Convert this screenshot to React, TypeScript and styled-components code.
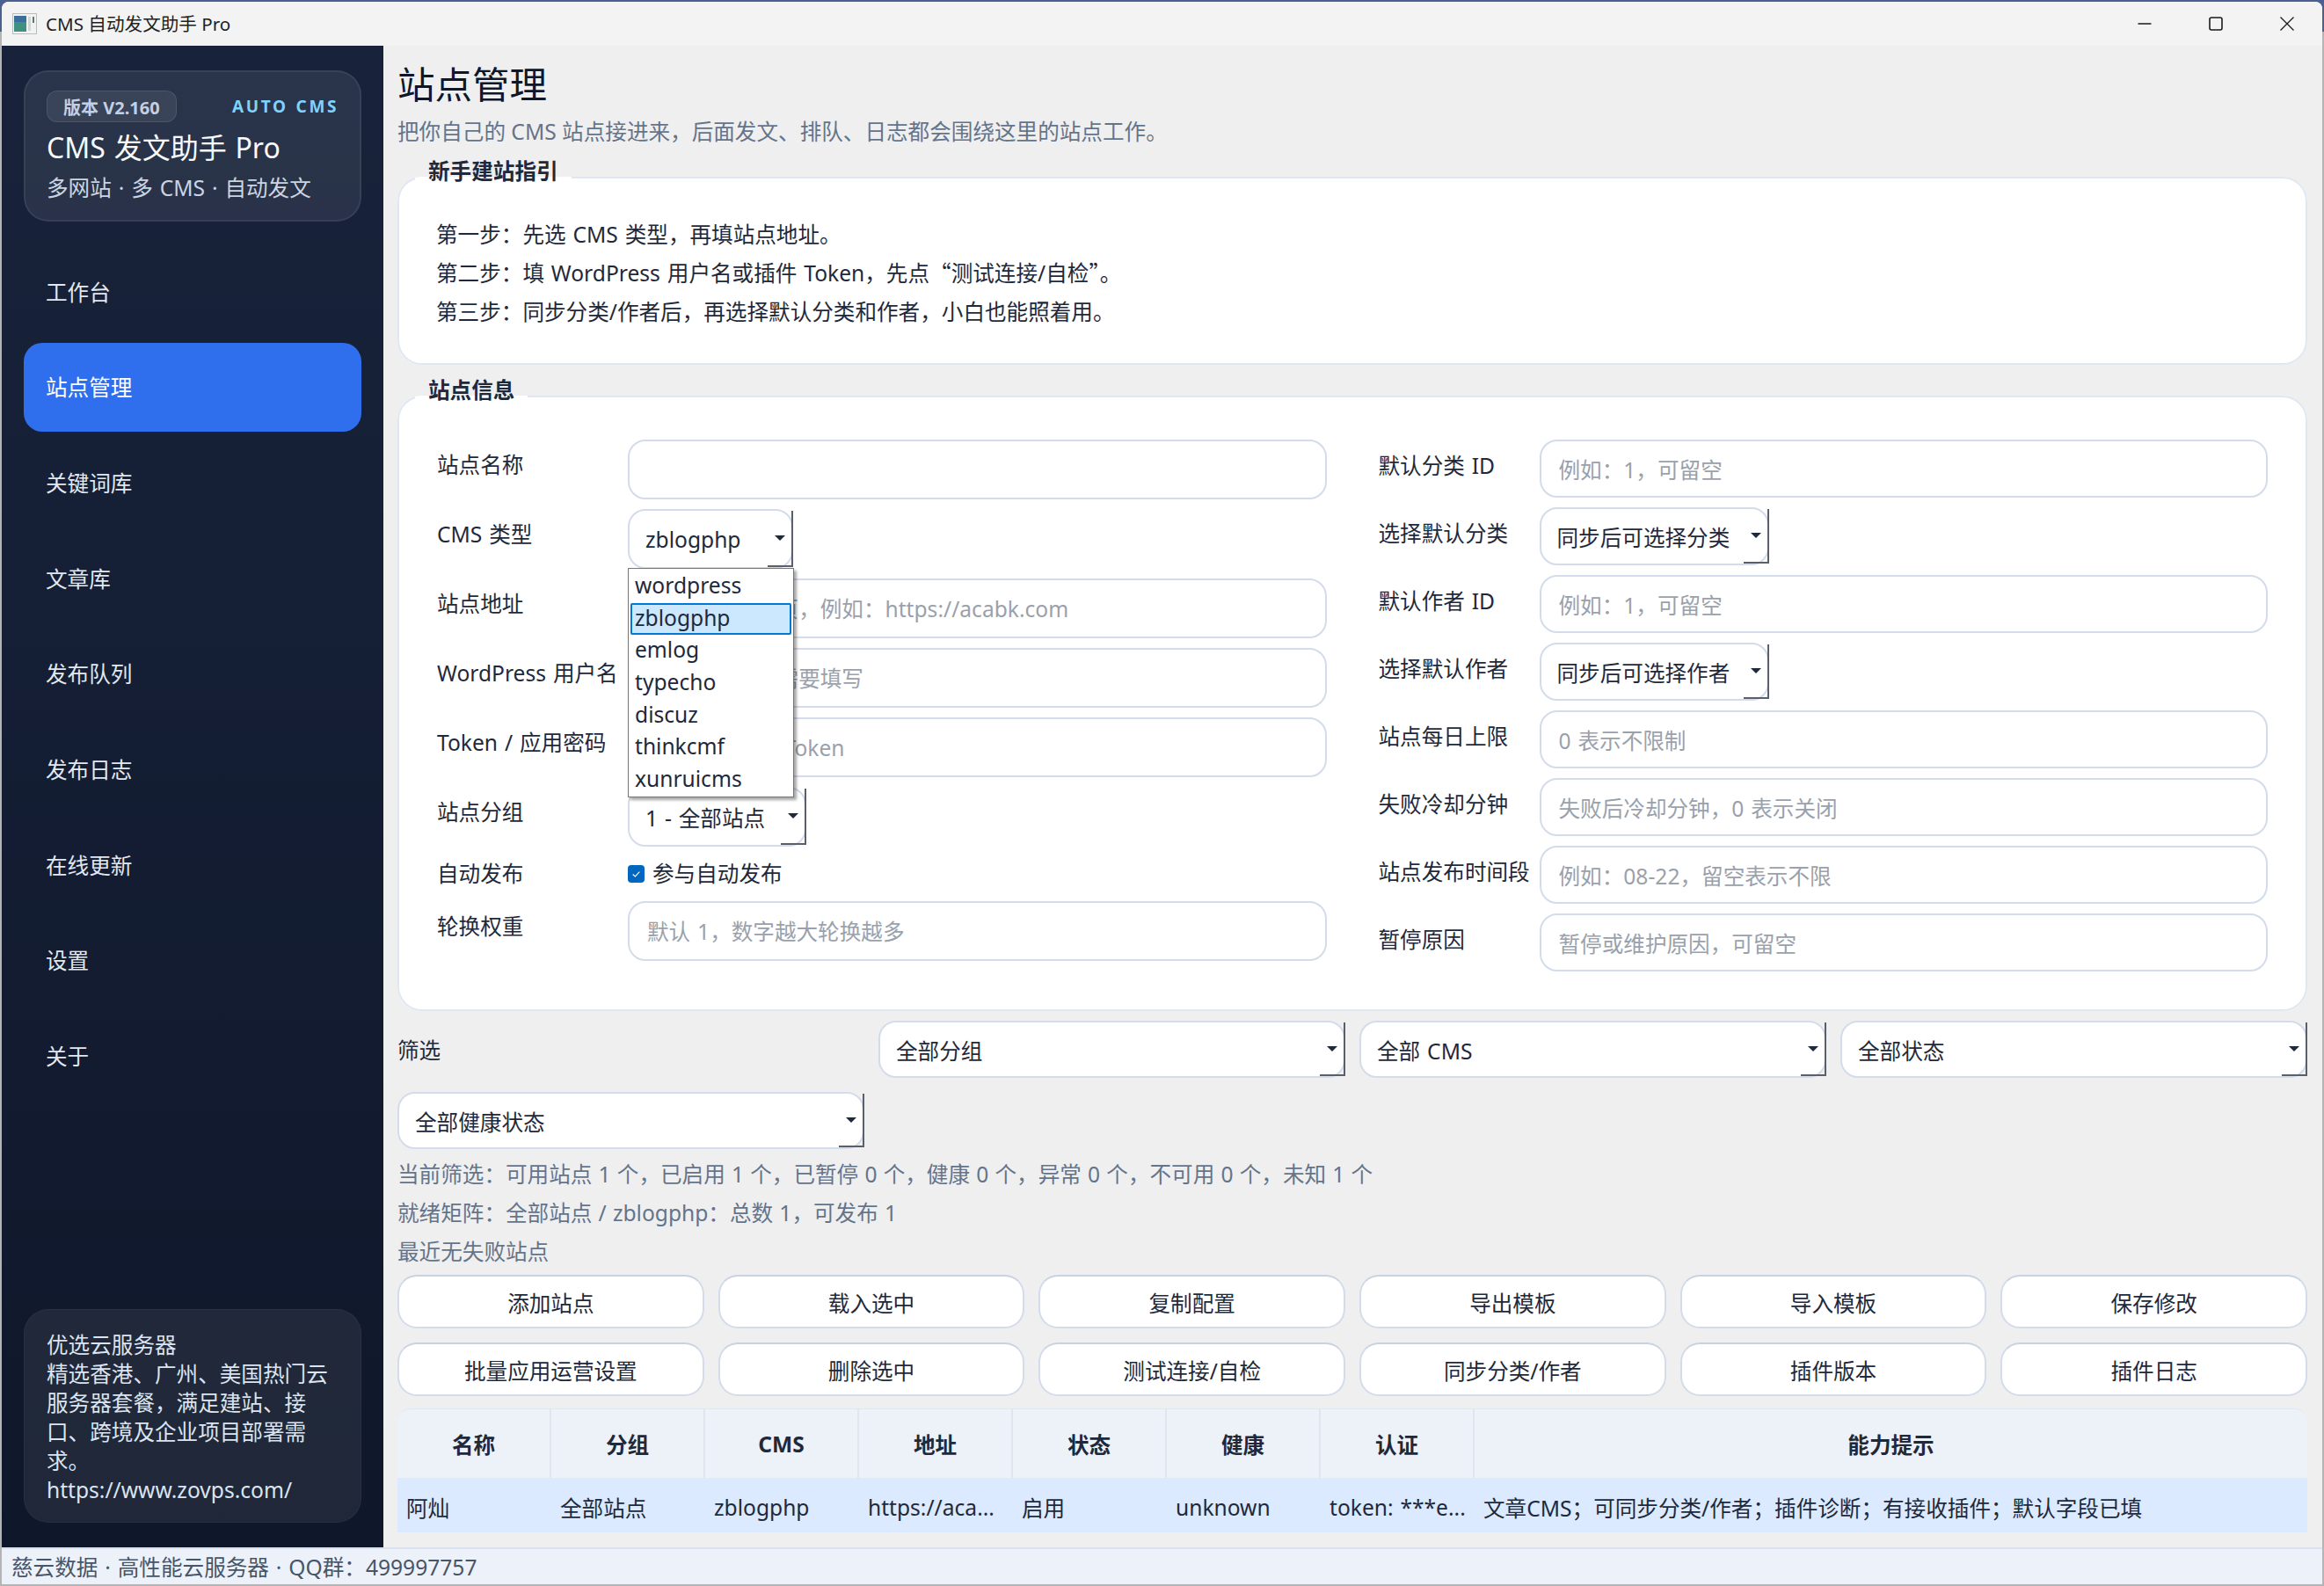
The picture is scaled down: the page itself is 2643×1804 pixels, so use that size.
import React from "react";
import styled, { createGlobalStyle } from "styled-components";

const navItems = ["工作台", "站点管理", "关键词库", "文章库", "发布队列", "发布日志", "在线更新", "设置", "关于"];

const cmsOptions = ["wordpress", "zblogphp", "emlog", "typecho", "discuz", "thinkcmf", "xunruicms"];

const buttons = [
  "添加站点",
  "载入选中",
  "复制配置",
  "导出模板",
  "导入模板",
  "保存修改",
  "批量应用运营设置",
  "删除选中",
  "测试连接/自检",
  "同步分类/作者",
  "插件版本",
  "插件日志",
];

const tableHead = ["名称", "分组", "CMS", "地址", "状态", "健康", "认证", "能力提示"];
const tableRow = [
  "阿灿",
  "全部站点",
  "zblogphp",
  "https://aca...",
  "启用",
  "unknown",
  "token: ***e...",
  "文章CMS；可同步分类/作者；插件诊断；有接收插件；默认字段已填",
];

export default function App() {
  return (
    <>
      <GlobalStyle />
      <Window>
        <TitleBar>
          <AppIcon viewBox="0 0 28 24">
            <rect x="0.5" y="0.5" width="27" height="23" fill="#f1f3f1" stroke="#b9bdbd" />
            <rect x="2" y="3" width="14" height="18" fill="#3f8f83" />
            <rect x="2" y="3" width="14" height="7" fill="#3a6f9c" />
            <rect x="18" y="4" width="3" height="16" fill="#cfd6d4" />
            <rect x="23" y="4" width="2" height="7" fill="#5f7a72" />
          </AppIcon>
          <WindowTitle>CMS 自动发文助手 Pro</WindowTitle>
          <WindowControls>
            <svg viewBox="0 0 16 16" width="16" height="16">
              <path d="M0.5 8h15" stroke="#1a1a1a" strokeWidth="1.4" fill="none" />
            </svg>
            <svg viewBox="0 0 16 16" width="16" height="16">
              <rect x="1" y="1" width="14" height="14" rx="2" stroke="#1a1a1a" strokeWidth="1.6" fill="none" />
            </svg>
            <svg viewBox="0 0 16 16" width="16" height="16">
              <path d="M0.5 0.5l15 15M15.5 0.5l-15 15" stroke="#1a1a1a" strokeWidth="1.3" fill="none" />
            </svg>
          </WindowControls>
        </TitleBar>

        <Body>
          <Sidebar>
            <BrandCard>
              <BrandTop>
                <VersionBadge>版本 V2.160</VersionBadge>
                <AutoTag>AUTO CMS</AutoTag>
              </BrandTop>
              <BrandName>CMS 发文助手 Pro</BrandName>
              <BrandSub>多网站 · 多 CMS · 自动发文</BrandSub>
            </BrandCard>

            <Nav>
              {navItems.map((item) => (
                <NavItem key={item} $active={item === "站点管理"}>
                  {item}
                </NavItem>
              ))}
            </Nav>

            <PromoCard>
              <div>优选云服务器</div>
              <div>精选香港、广州、美国热门云服务器套餐，满足建站、接口、跨境及企业项目部署需求。</div>
              <div>https://www.zovps.com/</div>
            </PromoCard>
          </Sidebar>

          <Main>
            <PageTitle>站点管理</PageTitle>
            <PageSub>把你自己的 CMS 站点接进来，后面发文、排队、日志都会围绕这里的站点工作。</PageSub>

            <Group>
              <GroupTitle>新手建站指引</GroupTitle>
              <GuideBody>
                <GuideLine>第一步：先选 CMS 类型，再填站点地址。</GuideLine>
                <GuideLine>
                  第二步：填 WordPress 用户名或插件 Token，先点<CjkText>“</CjkText>测试连接/自检<CjkText>”</CjkText>。
                </GuideLine>
                <GuideLine>第三步：同步分类/作者后，再选择默认分类和作者，小白也能照着用。</GuideLine>
              </GuideBody>
            </Group>

            <Group>
              <GroupTitle>站点信息</GroupTitle>
              <FormBody>
                <LeftColumn>
                  <LeftRow>
                    <FieldLabel>站点名称</FieldLabel>
                    <TextInput />
                  </LeftRow>
                  <LeftRow>
                    <FieldLabel>CMS 类型</FieldLabel>
                    <SelectBox $width={188}>
                      zblogphp
                      <OptionList>
                        {cmsOptions.map((option) => (
                          <OptionItem key={option} $selected={option === "zblogphp"}>
                            {option}
                          </OptionItem>
                        ))}
                      </OptionList>
                    </SelectBox>
                  </LeftRow>
                  <LeftRow>
                    <FieldLabel>站点地址</FieldLabel>
                    <TextInput placeholder="请填写站点首页，例如：https://acabk.com" />
                  </LeftRow>
                  <LeftRow>
                    <FieldLabel>WordPress 用户名</FieldLabel>
                    <TextInput placeholder="应用密码模式需要填写" />
                  </LeftRow>
                  <LeftRow>
                    <FieldLabel>Token / 应用密码</FieldLabel>
                    <TextInput placeholder="填写应用密码 Token" />
                  </LeftRow>
                  <LeftRow>
                    <FieldLabel>站点分组</FieldLabel>
                    <SelectBox $width={203}>1 - 全部站点</SelectBox>
                  </LeftRow>
                  <CheckRow>
                    <FieldLabel>自动发布</FieldLabel>
                    <CheckLabel>
                      <CheckMark>
                        <svg viewBox="0 0 20 20" width="20" height="20">
                          <path d="M6 10.5l2.8 2.6L14 7.5" stroke="#fff" strokeWidth="1.2" fill="none" />
                        </svg>
                      </CheckMark>
                      <CheckText>参与自动发布</CheckText>
                    </CheckLabel>
                  </CheckRow>
                  <LeftRow>
                    <FieldLabel>轮换权重</FieldLabel>
                    <TextInput placeholder="默认 1，数字越大轮换越多" />
                  </LeftRow>
                </LeftColumn>

                <RightColumn>
                  <RightRow>
                    <FieldLabel>默认分类 ID</FieldLabel>
                    <TextInput placeholder="例如：1，可留空" />
                  </RightRow>
                  <RightRow>
                    <FieldLabel>选择默认分类</FieldLabel>
                    <SelectBox $width={261}>同步后可选择分类</SelectBox>
                  </RightRow>
                  <RightRow>
                    <FieldLabel>默认作者 ID</FieldLabel>
                    <TextInput placeholder="例如：1，可留空" />
                  </RightRow>
                  <RightRow>
                    <FieldLabel>选择默认作者</FieldLabel>
                    <SelectBox $width={261}>同步后可选择作者</SelectBox>
                  </RightRow>
                  <RightRow>
                    <FieldLabel>站点每日上限</FieldLabel>
                    <TextInput placeholder="0 表示不限制" />
                  </RightRow>
                  <RightRow>
                    <FieldLabel>失败冷却分钟</FieldLabel>
                    <TextInput placeholder="失败后冷却分钟，0 表示关闭" />
                  </RightRow>
                  <RightRow>
                    <FieldLabel>站点发布时间段</FieldLabel>
                    <TextInput placeholder="例如：08-22，留空表示不限" />
                  </RightRow>
                  <RightRow>
                    <FieldLabel>暂停原因</FieldLabel>
                    <TextInput placeholder="暂停或维护原因，可留空" />
                  </RightRow>
                </RightColumn>
              </FormBody>
            </Group>

            <FilterGrid>
              <FilterLabel>筛选</FilterLabel>
              <SelectBox>全部分组</SelectBox>
              <SelectBox>全部 CMS</SelectBox>
              <SelectBox>全部状态</SelectBox>
              <SelectBox>全部健康状态</SelectBox>
            </FilterGrid>

            <InfoLines>
              <div>当前筛选：可用站点 1 个，已启用 1 个，已暂停 0 个，健康 0 个，异常 0 个，不可用 0 个，未知 1 个</div>
              <div>就绪矩阵：全部站点 / zblogphp：总数 1，可发布 1</div>
              <div>最近无失败站点</div>
            </InfoLines>

            <ButtonGrid>
              {buttons.map((label) => (
                <ActionButton key={label}>{label}</ActionButton>
              ))}
            </ButtonGrid>

            <SiteTable>
              <colgroup>
                {tableHead.slice(0, 7).map((head) => (
                  <col key={head} width="175" />
                ))}
                <col />
              </colgroup>
              <thead>
                <tr>
                  {tableHead.map((head) => (
                    <HeadCell key={head}>{head}</HeadCell>
                  ))}
                </tr>
              </thead>
              <tbody>
                <tr>
                  {tableRow.map((cell) => (
                    <RowCell key={cell}>{cell}</RowCell>
                  ))}
                </tr>
              </tbody>
            </SiteTable>
          </Main>
        </Body>

        <StatusBar>慈云数据 · 高性能云服务器 · QQ群：499997757</StatusBar>
      </Window>
    </>
  );
}

const GlobalStyle = createGlobalStyle`
  html, body {
    margin: 0;
    height: 100%;
  }

  body {
    background: linear-gradient(#4a6090 0 36px, #b4b4b4 36px);
    font-family: "Noto Sans", "Noto Sans CJK SC", sans-serif;
    font-size: 24.6px;
    word-spacing: 1.5px;
    color: #1e293b;
  }

  * {
    box-sizing: border-box;
  }
`;

const Window = styled.div`
  width: 2639px;
  height: 1800px;
  margin: 2px;
  display: flex;
  flex-direction: column;
  background: #efefef;
  border-radius: 8px 8px 0 0;
  overflow: hidden;
`;

const TitleBar = styled.div`
  height: 50px;
  flex: none;
  display: flex;
  align-items: center;
  padding-left: 12px;
  background: #f3f3f3;
`;

const AppIcon = styled.svg`
  width: 28px;
  height: 24px;
`;

const WindowTitle = styled.div`
  margin-left: 10px;
  padding-bottom: 2px;
  font-size: 20.6px;
  word-spacing: 0;
  color: #1f1f1f;
`;

const WindowControls = styled.div`
  margin-left: auto;
  padding-right: 32px;
  display: flex;
  gap: 65px;
`;

const Body = styled.div`
  flex: 1;
  min-height: 0;
  display: flex;
`;

const Sidebar = styled.aside`
  width: 434px;
  flex: none;
  display: flex;
  flex-direction: column;
  padding: 28px 25px;
  background: linear-gradient(#18233b, #0f172a);
`;

const BrandCard = styled.div`
  height: 172px;
  padding: 21px 24px 0;
  border: 2px solid rgba(255, 255, 255, 0.07);
  border-radius: 28px;
  background: rgba(255, 255, 255, 0.08);
`;

const BrandTop = styled.div`
  display: flex;
  align-items: center;
  justify-content: space-between;
`;

const VersionBadge = styled.div`
  height: 36px;
  padding: 0 18px;
  display: flex;
  align-items: center;
  border: 1px solid rgba(255, 255, 255, 0.1);
  border-radius: 12px;
  background: rgba(255, 255, 255, 0.08);
  font-size: 20px;
  font-weight: 700;
  word-spacing: 0;
  color: #c3d0e4;
`;

const AutoTag = styled.div`
  font-size: 19px;
  font-weight: 700;
  letter-spacing: 2.6px;
  color: #7dd3fc;
`;

const BrandName = styled.div`
  margin-top: 7px;
  font-size: 32px;
  line-height: 44px;
  color: #f8fafc;
`;

const BrandSub = styled.div`
  margin-top: 7px;
  line-height: 34px;
  color: #cbd5e1;
`;

const Nav = styled.nav`
  margin-top: 29px;
  display: flex;
  flex-direction: column;
  gap: 7.7px;
`;

const NavItem = styled.div<{ $active?: boolean }>`
  height: 101px;
  padding: 0 0 2px 25px;
  display: flex;
  align-items: center;
  border-radius: 21px;
  color: ${(p) => (p.$active ? "#ffffff" : "#e2e8f0")};
  background: ${(p) => (p.$active ? "#2f6fed" : "transparent")};
`;

const PromoCard = styled.div`
  margin-top: auto;
  height: 243px;
  padding: 23px 25px 0;
  border: 1px solid rgba(255, 255, 255, 0.04);
  border-radius: 28px;
  background: rgba(255, 255, 255, 0.07);
  line-height: 33px;
  color: #dbe4f0;
`;

const Main = styled.main`
  flex: 1;
  min-width: 0;
  padding: 19px 17px 0 16px;
`;

const PageTitle = styled.h1`
  margin: 0;
  font-size: 42.5px;
  line-height: 50px;
  font-weight: 400;
  color: #0f172a;
`;

const PageSub = styled.div`
  margin-top: 11px;
  margin-bottom: 12px;
  line-height: 36px;
  word-spacing: 0;
  color: #64748b;
`;

const Group = styled.fieldset`
  margin: 0 0 14px;
  padding: 0;
  min-width: 0;
  border: 2px solid #dfe7f2;
  border-radius: 28px;
  background: #ffffff;
`;

const GroupTitle = styled.legend`
  margin-left: 18px;
  padding: 0 15px 14px;
  line-height: 30px;
  font-weight: 700;
  color: #1e293b;
`;

const GuideBody = styled.div`
  padding: 21px 42px 36px;
`;

const GuideLine = styled.div`
  height: 44px;
  line-height: 44px;
`;

const CjkText = styled.span`
  font-family: "Noto Sans CJK SC", sans-serif;
  line-height: 0;
`;

const FormBody = styled.div`
  display: grid;
  grid-template-columns: 1fr 1fr;
  column-gap: 59px;
  padding: 27px 43px 43px;
`;

const LeftColumn = styled.div`
  display: flex;
  flex-direction: column;
  gap: 11px;
`;

const RightColumn = styled(LeftColumn)``;

const FieldLabel = styled.div`
  padding-bottom: 14px;
  white-space: nowrap;
  color: #1e293b;
`;

const TextInput = styled.input`
  width: 100%;
  height: 100%;
  padding: 0 20px;
  border: 2px solid #d3dcea;
  border-radius: 20px;
  background: #ffffff;
  font: inherit;
  word-spacing: inherit;
  color: #1e293b;
  outline: none;

  &::placeholder {
    color: #9aa1ab;
    opacity: 1;
  }
`;

const LeftRow = styled.div`
  height: 68px;
  display: grid;
  grid-template-columns: 217px 1fr;
  align-items: center;
`;

const CheckRow = styled(LeftRow)`
  height: 40px;

  ${FieldLabel} {
    padding-bottom: 4px;
  }
`;

const RightRow = styled(LeftRow)`
  height: 66px;
  grid-template-columns: 183px 1fr;

  ${FieldLabel} {
    padding-bottom: 10px;
  }

  ${TextInput} {
    padding-top: 2px;
  }
`;

const SelectBox = styled.div<{ $width?: number }>`
  position: relative;
  width: ${(p) => (p.$width ? `${p.$width}px` : "100%")};
  height: 100%;
  padding: 0 18px;
  display: flex;
  align-items: center;
  white-space: nowrap;
  border: 2px solid #d3dcea;
  border-radius: 20px;
  background: #ffffff;
  color: #1e293b;

  &::before {
    content: "";
    position: absolute;
    right: 7px;
    top: calc(50% - 4px);
    border-left: 6px solid transparent;
    border-right: 6px solid transparent;
    border-top: 6px solid #1e293b;
  }

  &::after {
    content: "";
    position: absolute;
    right: -2px;
    top: 0;
    bottom: 0;
    width: 27px;
    border-right: 2px solid #59606c;
    border-bottom: 2px solid #59606c;
  }
`;

const OptionList = styled.div`
  position: absolute;
  z-index: 5;
  left: -2px;
  top: calc(100% + 1px);
  width: 189px;
  padding: 2px 2px 1px;
  border: 1px solid #767676;
  background: #ffffff;
  box-shadow: 3px 3px 3px rgba(0, 0, 0, 0.35);
`;

const OptionItem = styled.div<{ $selected?: boolean }>`
  height: 36.6px;
  padding: 0 0 3px 3px;
  display: flex;
  align-items: center;
  border: 2px solid ${(p) => (p.$selected ? "#0078d7" : "transparent")};
  border-radius: 2px;
  background: ${(p) => (p.$selected ? "#cce8ff" : "transparent")};
  color: #1e293b;
`;

const CheckLabel = styled.div`
  display: flex;
  align-items: center;
  gap: 9px;
  color: #1e293b;
`;

const CheckText = styled.span`
  margin-top: -4px;
`;

const CheckMark = styled.span`
  width: 19px;
  height: 20px;
  display: flex;
  border-radius: 4px;
  background: #0067c0;
`;

const FilterGrid = styled.div`
  margin-top: -3px;
  display: grid;
  grid-template-columns: repeat(4, 1fr);
  grid-auto-rows: 65px;
  gap: 16px;
`;

const FilterLabel = styled.div`
  align-self: center;
  padding-bottom: 2px;
  color: #1e293b;
`;

const InfoLines = styled.div`
  margin-top: 7px;
  line-height: 44px;
  word-spacing: 0.8px;
  color: #64748b;
`;

const ButtonGrid = styled.div`
  margin-top: 4px;
  display: grid;
  grid-template-columns: repeat(6, 1fr);
  grid-auto-rows: 61px;
  gap: 16px;
`;

const ActionButton = styled.button`
  border: 2px solid #d3dcea;
  border-top-color: #c8d3e2;
  border-radius: 22px;
  background: #ffffff;
  font: inherit;
  color: #1e293b;
`;

const SiteTable = styled.table`
  margin-top: 14px;
  width: 100%;
  table-layout: fixed;
  border-collapse: separate;
  border-spacing: 0;
`;

const HeadCell = styled.th`
  height: 79px;
  padding: 0;
  font-weight: 700;
  color: #1e293b;
  background: #edf2f9;
  border-top: 1px solid #e0e7f1;
  border-right: 2px solid #dfe6f0;

  &:first-child {
    border-top-left-radius: 14px;
  }

  &:last-child {
    border-right: 0;
    border-top-right-radius: 14px;
  }
`;

const RowCell = styled.td`
  height: 62px;
  padding: 4px 10px 0;
  white-space: nowrap;
  overflow: hidden;
  background: #dbeafe;
  color: #1e293b;
`;

const StatusBar = styled.div`
  height: 42px;
  flex: none;
  padding: 0 0 2px 11px;
  display: flex;
  align-items: center;
  border-top: 2px solid #d9e2ee;
  background: #edf2fa;
  color: #475569;
`;
